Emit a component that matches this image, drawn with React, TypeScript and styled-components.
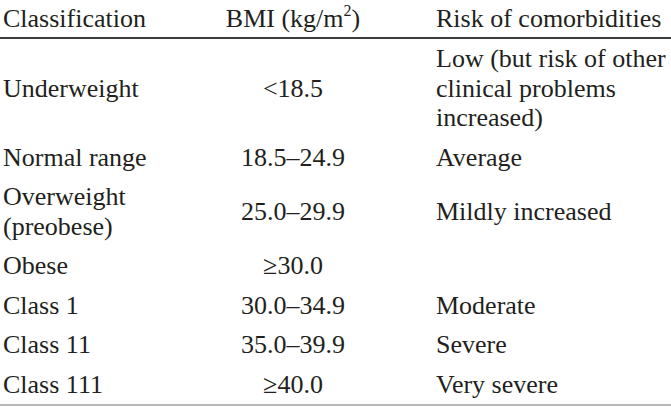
import React from "react";
import styled, { createGlobalStyle } from "styled-components";

const Global = createGlobalStyle`
  html, body { margin: 0; padding: 0; background: #ffffff; }
  body { font-family: "Liberation Serif", "Times New Roman", serif; color: #231f20; }
`;

const Sheet = styled.div`
  width: 671px;
  font-family: "Liberation Serif", "Times New Roman", serif;
  font-size: 26px;
  line-height: 29.5px;
  color: #231f20;
  border-bottom: 2px solid #b8b8b8;
`;

const Row = styled.div<{ $head?: boolean }>`
  display: grid;
  grid-template-columns: 154px 278px 1fr;
  align-items: center;
  padding: ${(p) => (p.$head ? "4px 0 3.5px" : "5px 0")};
  border-bottom: ${(p) => (p.$head ? "2px solid #3c3c3c" : "none")};
`;

const Cell = styled.div<{ $center?: boolean; $pl?: number }>`
  text-align: ${(p) => (p.$center ? "center" : "left")};
  padding-left: ${(p) => p.$pl ?? 0}px;
  white-space: nowrap;
`;

const Sup = styled.sup`
  font-size: 16px;
  line-height: 0;
  vertical-align: 0;
  position: relative;
  top: -11px;
`;

type Entry = { c: React.ReactNode; b: string; r: React.ReactNode };

const rows: Entry[] = [
  {
    c: "Underweight",
    b: "<18.5",
    r: (
      <>
        Low (but risk of other
        <br />
        clinical problems
        <br />
        increased)
      </>
    ),
  },
  { c: "Normal range", b: "18.5–24.9", r: "Average" },
  {
    c: (
      <>
        Overweight
        <br />
        (preobese)
      </>
    ),
    b: "25.0–29.9",
    r: "Mildly increased",
  },
  { c: "Obese", b: "≥30.0", r: "" },
  { c: "Class 1", b: "30.0–34.9", r: "Moderate" },
  { c: "Class 11", b: "35.0–39.9", r: "Severe" },
  { c: "Class 111", b: "≥40.0", r: "Very severe" },
];

export default function App() {
  return (
    <>
      <Global />
      <Sheet>
        <Row $head>
          <Cell $pl={3}>Classification</Cell>
          <Cell $center>
            BMI (kg/m<Sup>2</Sup>)
          </Cell>
          <Cell $pl={4}>Risk of comorbidities</Cell>
        </Row>
        {rows.map((row, i) => (
          <Row key={i}>
            <Cell $pl={3}>{row.c}</Cell>
            <Cell $center>{row.b}</Cell>
            <Cell $pl={4}>{row.r}</Cell>
          </Row>
        ))}
      </Sheet>
    </>
  );
}
